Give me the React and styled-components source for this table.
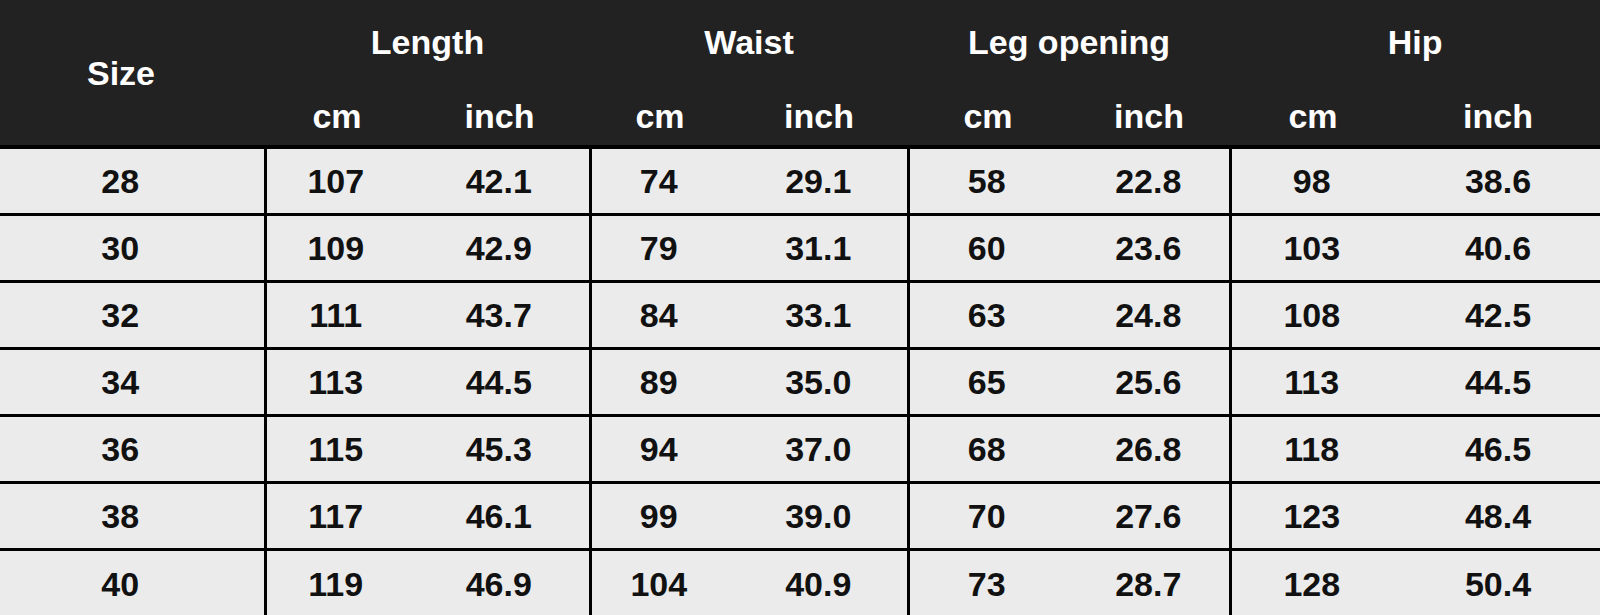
import React from "react";
import styled, { createGlobalStyle } from "styled-components";

const groups = ["Length", "Waist", "Leg opening", "Hip"];
const widths = [265, 144, 181, 140, 178, 160, 162, 166, 204];

const rows = [
  ["28", "107", "42.1", "74", "29.1", "58", "22.8", "98", "38.6"],
  ["30", "109", "42.9", "79", "31.1", "60", "23.6", "103", "40.6"],
  ["32", "111", "43.7", "84", "33.1", "63", "24.8", "108", "42.5"],
  ["34", "113", "44.5", "89", "35.0", "65", "25.6", "113", "44.5"],
  ["36", "115", "45.3", "94", "37.0", "68", "26.8", "118", "46.5"],
  ["38", "117", "46.1", "99", "39.0", "70", "27.6", "123", "48.4"],
  ["40", "119", "46.9", "104", "40.9", "73", "28.7", "128", "50.4"],
];

const SizeChart = () => {
  return (
    <Table>
      <colgroup>
        {widths.map((w, i) => (
          <col key={i} style={{ width: w }} />
        ))}
      </colgroup>
      <thead>
        <TitleRow>
          <SizeHead rowSpan={2}>Size</SizeHead>
          {groups.map((g) => (
            <GroupHead key={g} colSpan={2}>
              {g}
            </GroupHead>
          ))}
        </TitleRow>
        <UnitRow>
          {groups.map((g) => (
            <React.Fragment key={g}>
              <UnitHead>cm</UnitHead>
              <UnitHead>inch</UnitHead>
            </React.Fragment>
          ))}
        </UnitRow>
      </thead>
      <tbody>
        {rows.map((r, ri) => (
          <BodyRow key={ri} $first={ri === 0}>
            {r.map((v, ci) => (
              <Cell key={ci} $size={ci === 0} $divider={ci % 2 === 1}>
                {v}
              </Cell>
            ))}
          </BodyRow>
        ))}
      </tbody>
    </Table>
  );
};

const App = () => (
  <>
    <GlobalStyle />
    <SizeChart />
  </>
);

const GlobalStyle = createGlobalStyle`
  html, body {
    margin: 0;
    padding: 0;
    background: #ebebeb;
    overflow: hidden;
  }
  body {
    font-family: "Liberation Sans", Arial, sans-serif;
  }
`;

const Table = styled.table`
  width: 1600px;
  table-layout: fixed;
  border-collapse: collapse;
  border-spacing: 0;
  font-family: "Liberation Sans", Arial, sans-serif;
  font-weight: 700;
  font-size: 34px;
`;

const TitleRow = styled.tr`
  background: #222222;
  height: 82px;
`;

const UnitRow = styled.tr`
  background: #222222;
  height: 65px;
`;

const HeadCell = styled.th`
  color: #ffffff;
  font-weight: 700;
  padding: 0;
  text-align: center;
  vertical-align: middle;
`;

const SizeHead = styled(HeadCell)`
  padding-right: 23px;
  padding-top: 2px;
  border-bottom: 4px solid #000;
`;

const GroupHead = styled(HeadCell)`
  padding-top: 2px;
`;

const UnitHead = styled(HeadCell)`
  padding-top: 6px;
  border-bottom: 4px solid #000;
`;

const BodyRow = styled.tr`
  height: 67px;
  background: #ebebeb;
  border-top: ${(p) => (p.$first ? "4px" : "3px")} solid #000;
`;

const Cell = styled.td`
  color: #111111;
  text-align: center;
  vertical-align: middle;
  padding: 2px ${(p) => (p.$size ? "23px" : p.$divider ? "4px" : "0")} 0 0;
  border-left: ${(p) => (p.$divider ? "3px solid #000" : "none")};
`;

export default App;
